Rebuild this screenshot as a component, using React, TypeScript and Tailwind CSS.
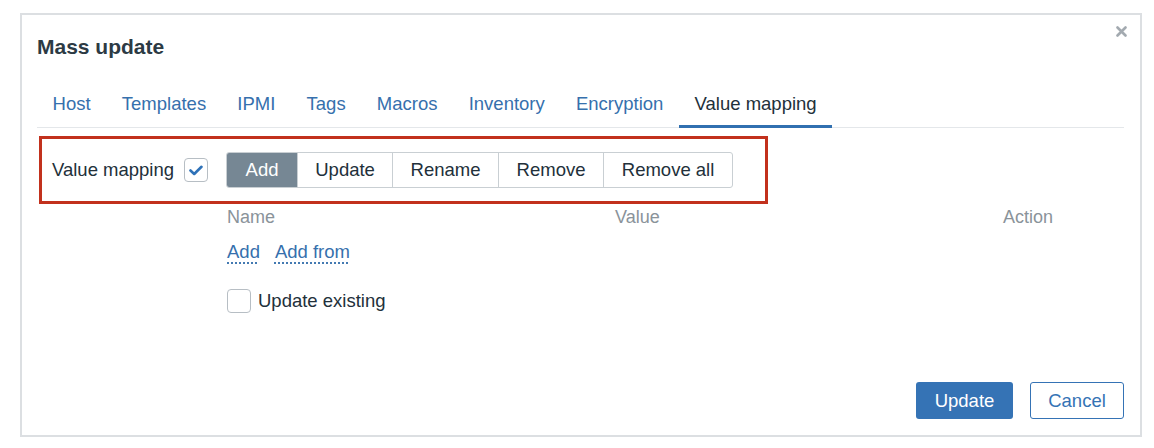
import React from "react";

const tabs = ["Host", "Templates", "IPMI", "Tags", "Macros", "Inventory", "Encryption", "Value mapping"];
const actions = ["Add", "Update", "Rename", "Remove", "Remove all"];

const Check = () => (
  <svg width="14" height="11" viewBox="0 0 14 11" fill="none">
    <path d="M1.5 5.5 L5.2 9 L12.5 1.8" stroke="#2f72b8" strokeWidth="2.6" strokeLinecap="round" strokeLinejoin="round" />
  </svg>
);

const App: React.FC = () => {
  return (
    <div className="w-[1154px] h-[448px] bg-white overflow-hidden pt-[13px] pl-[20px] font-['Liberation_Sans',Arial,sans-serif]">
      {/* dialog */}
      <div className="relative w-[1122px] h-[424px] border-2 border-[#dcdfe2] px-[15px] pr-[16px] pt-[20px] flex flex-col">
        {/* close */}
        <button className="absolute top-[10px] right-[13px] w-[12px] h-[12px] flex items-center justify-center">
          <svg width="11" height="11" viewBox="0 0 11 11">
            <path d="M1.5 1.5 L9.5 9.5 M9.5 1.5 L1.5 9.5" stroke="#a3aab0" strokeWidth="2.6" strokeLinecap="round" />
          </svg>
        </button>

        <h1 className="text-[21px] leading-[24px] font-bold text-[#2c3a44]">Mass update</h1>

        {/* tabs */}
        <div className="mt-[34px] flex border-b border-[#e4e7ea]">
          {tabs.map((t) => {
            const active = t === "Value mapping";
            return (
              <div
                key={t}
                className={`px-[15.6px] pb-[10px] text-[18.5px] leading-[22px] border-b-[3px] -mb-px ${
                  active ? "border-[#3170b0] text-[#22303a]" : "border-transparent text-[#3670ad]"
                }`}
              >
                {t}
              </div>
            );
          })}
        </div>

        {/* highlighted row */}
        <div className="mt-[8px] ml-[2px] w-[729px] h-[68px] border-[3px] border-[#c2311d] flex items-center pl-[10px]">
          <span className="text-[18.5px] text-[#22303a]">Value mapping</span>
          <span className="ml-[10px] w-[24px] h-[24px] rounded-[4px] border border-[#b7bec4] flex items-center justify-center">
            <Check />
          </span>
          <div className="ml-[18px] flex h-[36px] border border-[#c9cfd3] rounded-[3px] overflow-hidden">
            {actions.map((a, i) => (
              <div
                key={a}
                className={`h-full flex items-center justify-center text-[18.5px] ${
                  i === 0 ? "w-[70px] bg-[#768794] text-white" : "text-[#22303a] border-l border-[#c9cfd3]"
                } ${i === 1 ? "w-[95px]" : ""} ${i === 2 ? "w-[106px]" : ""} ${i === 3 ? "w-[105px]" : ""} ${
                  i === 4 ? "w-[129px]" : ""
                }`}
              >
                {a}
              </div>
            ))}
          </div>
        </div>

        {/* table header */}
        <div className="mt-[3px] ml-[190px] grid grid-cols-[388px_388px_1fr] text-[18px] leading-[20px] text-[#8a939a]">
          <span>Name</span>
          <span>Value</span>
          <span>Action</span>
        </div>

        {/* add links */}
        <div className="mt-[15px] ml-[190px] flex gap-[15px] text-[18.5px] leading-[20px] text-[#3670ad]">
          <span className="underline decoration-dotted decoration-[#3670ad] underline-offset-[5px]">Add</span>
          <span className="underline decoration-dotted decoration-[#3670ad] underline-offset-[5px]">Add from</span>
        </div>

        {/* update existing */}
        <div className="mt-[25px] ml-[190px] flex items-center">
          <span className="w-[24px] h-[24px] rounded-[4px] border border-[#b7bec4]" />
          <span className="ml-[7px] text-[18.5px] text-[#22303a]">Update existing</span>
        </div>

        {/* footer */}
        <div className="mt-auto mb-[16px] flex justify-end gap-[17px]">
          <button className="w-[97px] h-[37px] rounded-[3px] bg-[#3573b5] text-white text-[18.5px]">Update</button>
          <button className="w-[94px] h-[37px] rounded-[3px] border border-[#3573b5] text-[#3573b5] text-[18.5px] bg-white">
            Cancel
          </button>
        </div>
      </div>
    </div>
  );
};

export default App;
